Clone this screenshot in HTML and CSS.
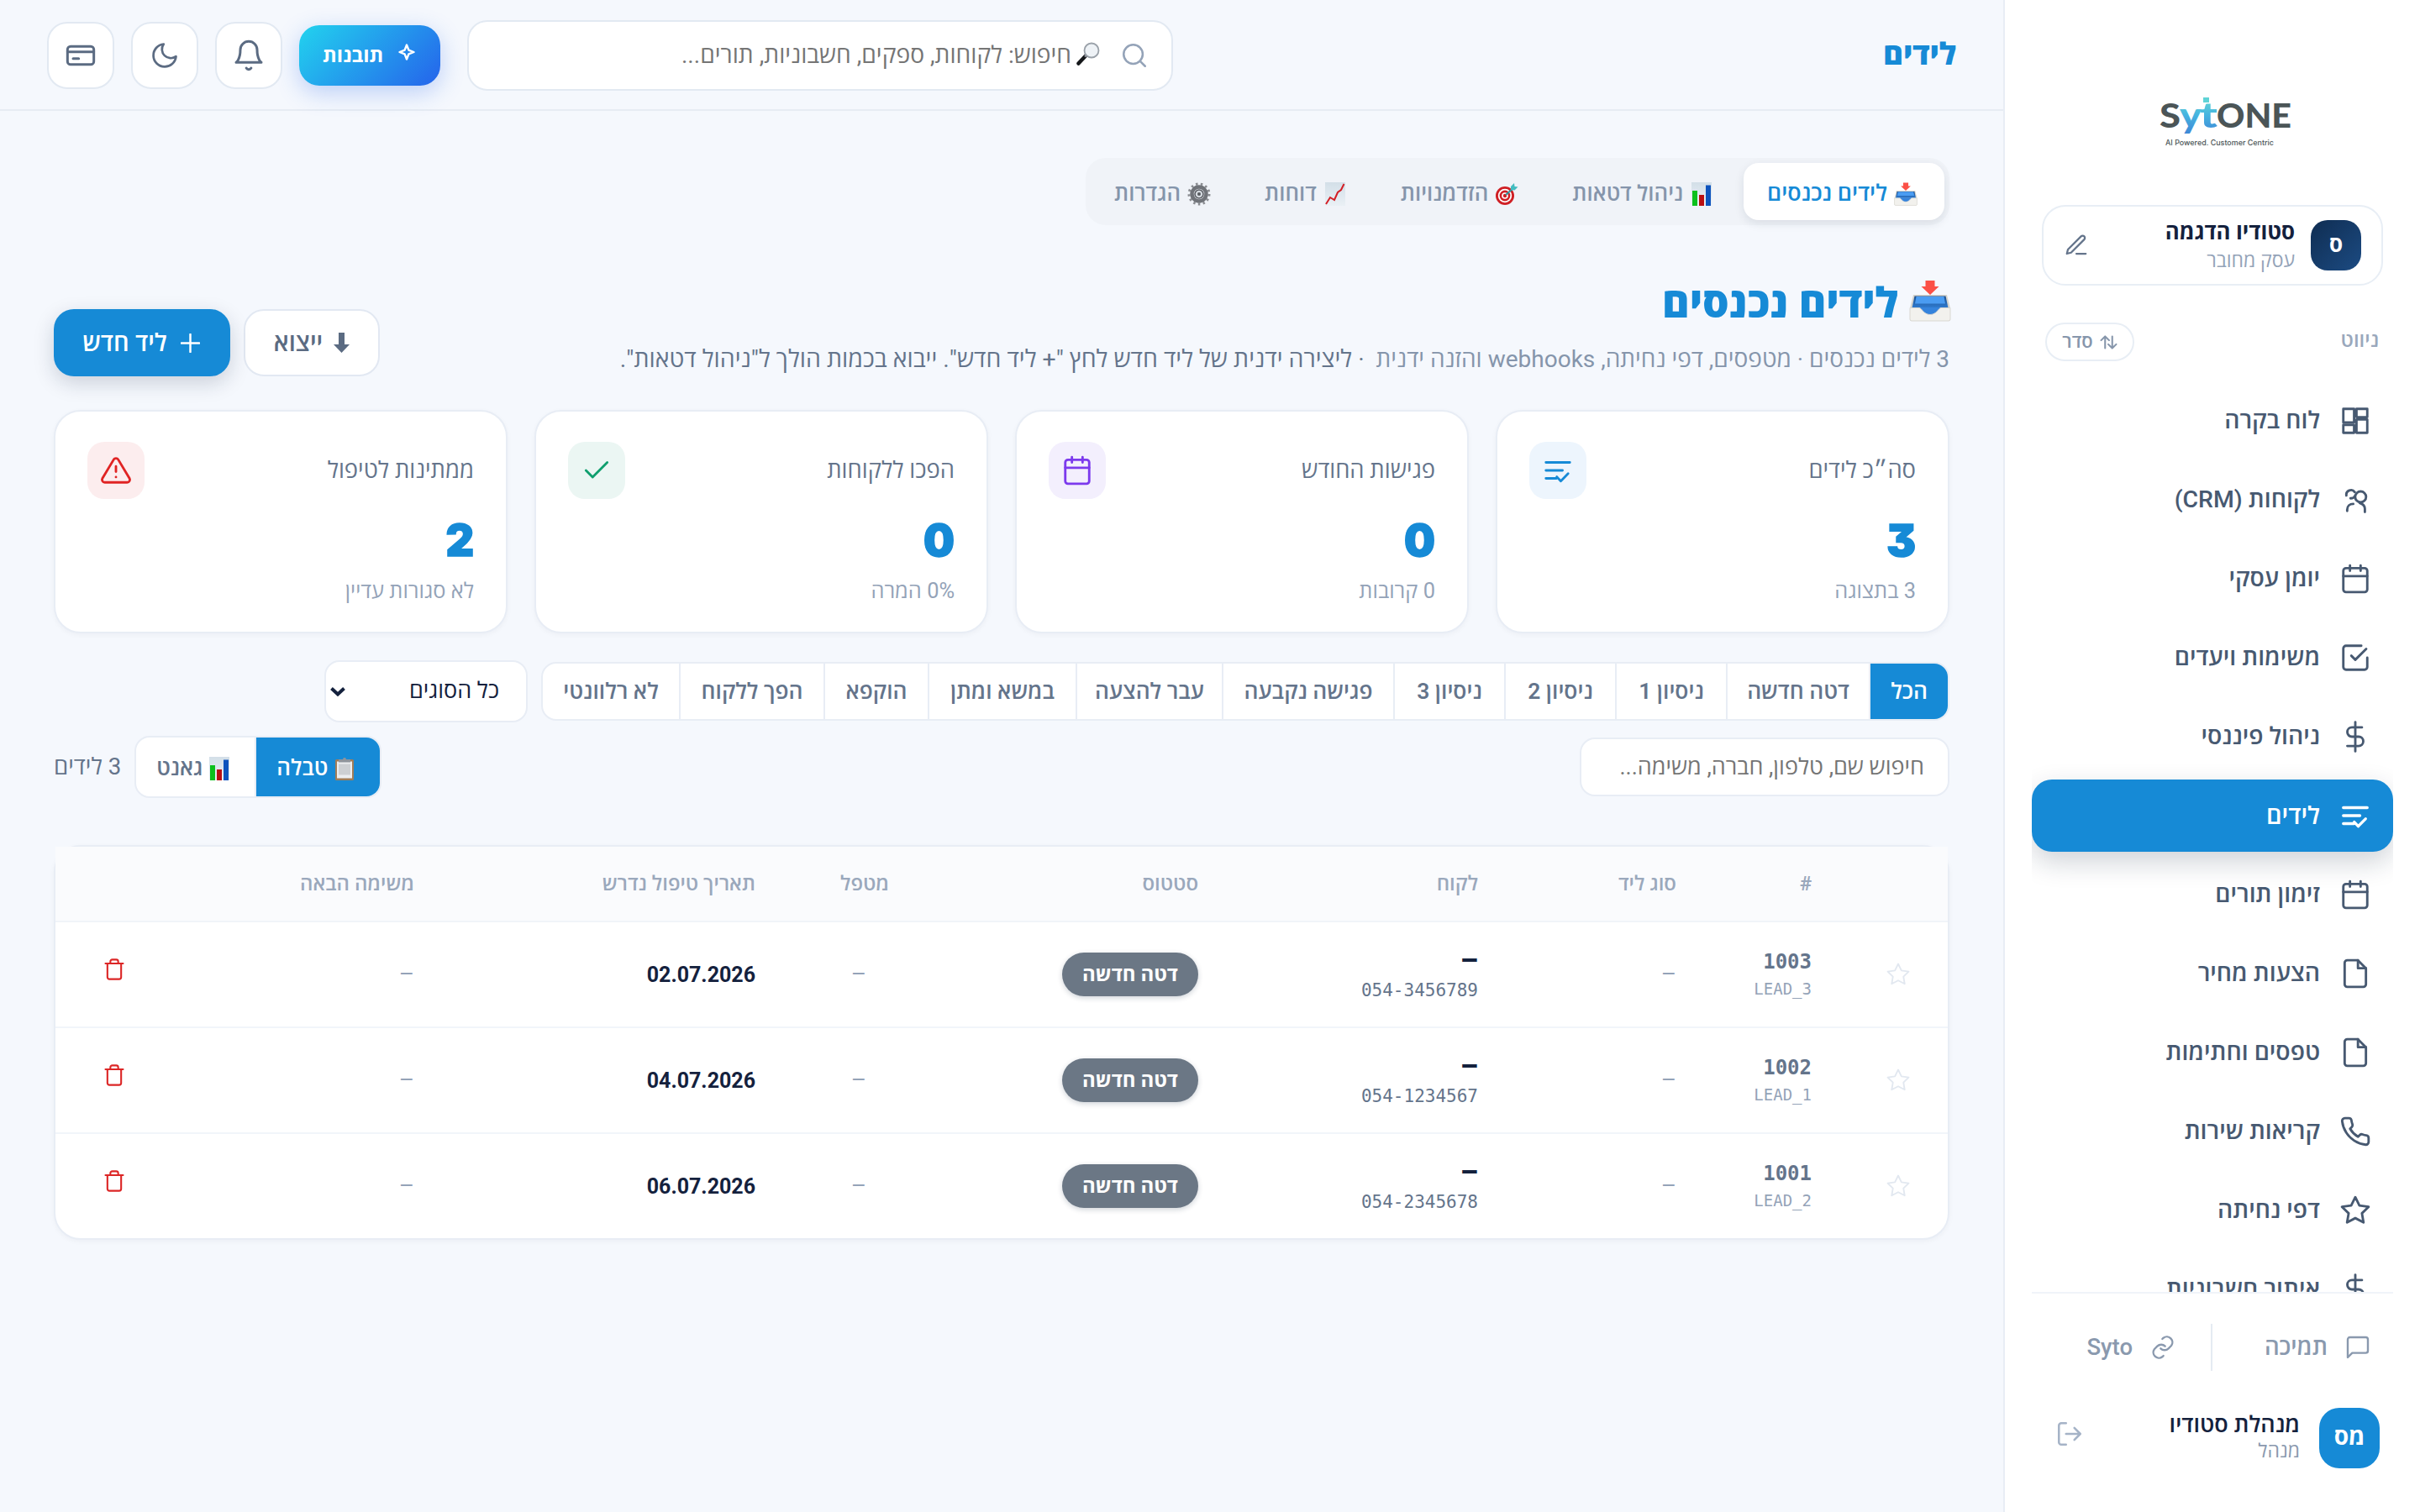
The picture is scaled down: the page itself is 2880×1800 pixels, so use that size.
FILE: index.html
```html
<!DOCTYPE html>
<html lang="he" dir="rtl">
<head>
    <meta charset="UTF-8">
    <meta name="viewport" content="width=device-width, initial-scale=1.0">
    <title>לידים</title>
    <link rel="stylesheet" href="styles.css">
</head>
<body>
    <svg class="sprite" aria-hidden="true">
        <defs>
            <linearGradient id="logo-grad" gradientUnits="userSpaceOnUse" x1="0" y1="4" x2="0" y2="46">
                <stop offset="0" stop-color="#63d6d4"/>
                <stop offset=".45" stop-color="#45b4e0"/>
                <stop offset="1" stop-color="#3f86d6"/>
            </linearGradient>
            <linearGradient id="tray-in" x1="0" y1="0" x2="0" y2="1">
                <stop offset="0" stop-color="#1d4f8c"/>
                <stop offset="1" stop-color="#2f7bd0"/>
            </linearGradient>
            <linearGradient id="paper" x1="0" y1="0" x2="0" y2="1">
                <stop offset="0" stop-color="#d3dfe8"/>
                <stop offset="1" stop-color="#eaf0f5"/>
            </linearGradient>
        </defs>

        <symbol id="i-dashboard" viewBox="0 0 24 24"><rect x="3" y="3" width="8.1" height="10.2"/><rect x="12.9" y="3" width="8.1" height="6.2"/><rect x="12.9" y="11" width="8.1" height="10"/><rect x="3" y="15" width="8.1" height="6"/></symbol>
        <symbol id="i-users" viewBox="0 0 24 24"><circle cx="16" cy="9.8" r="4.1"/><path d="M5.3 8.8a3.5 3.5 0 0 1 6.3-2.6M11.6 9.3c-.4 1-1.6 1.6-3.2 1.6M5.9 20.4v-1c0-2.5 1.9-4.3 4.6-4.3M15.4 14.4c2.4.7 3.8 2.3 3.8 4.4v2.4"/></symbol>
        <symbol id="i-calendar" viewBox="0 0 24 24"><rect x="3" y="4" width="18" height="18" rx="2"/><path d="M16 2v4M8 2v4M3 10h18"/></symbol>
        <symbol id="i-tasks" viewBox="0 0 24 24"><path d="M9 10.5l3 3 8.2-8.2"/><path d="M21 12v7a2 2 0 0 1-2 2H5a2 2 0 0 1-2-2V5a2 2 0 0 1 2-2h11.5"/></symbol>
        <symbol id="i-dollar" viewBox="0 0 24 24"><path d="M12 1v22M17 5H9.5a3.5 3.5 0 0 0 0 7h5a3.5 3.5 0 0 1 0 7H6"/></symbol>
        <symbol id="i-leads" viewBox="0 0 24 24"><path d="M3 6h18M3 12h12.5M3 18h8M11.2 16.8l3 3.2 5.5-5.6"/></symbol>
        <symbol id="i-file" viewBox="0 0 24 24"><path d="M14 2H6a2 2 0 0 0-2 2v16a2 2 0 0 0 2 2h12a2 2 0 0 0 2-2V8z"/><path d="M14 2v6h6"/></symbol>
        <symbol id="i-phone" viewBox="0 0 24 24"><path d="M22 16.92v3a2 2 0 0 1-2.18 2 19.79 19.79 0 0 1-8.63-3.07 19.5 19.5 0 0 1-6-6 19.79 19.79 0 0 1-3.07-8.67A2 2 0 0 1 4.11 2h3a2 2 0 0 1 2 1.72c.127.96.361 1.903.7 2.81a2 2 0 0 1-.45 2.11L8.09 9.91a16 16 0 0 0 6 6l1.27-1.27a2 2 0 0 1 2.11-.45c.907.339 1.85.573 2.81.7A2 2 0 0 1 22 16.92z"/></symbol>
        <symbol id="i-star" viewBox="0 0 24 24"><path d="M12 2l3.09 6.26L22 9.27l-5 4.87 1.18 6.88L12 17.77l-6.18 3.25L7 14.14 2 9.27l6.91-1.01z"/></symbol>
        <symbol id="i-message" viewBox="0 0 24 24"><path d="M21 15a2 2 0 0 1-2 2H7l-4 4V5a2 2 0 0 1 2-2h14a2 2 0 0 1 2 2z"/></symbol>
        <symbol id="i-link" viewBox="0 0 24 24"><path d="M10 13a5 5 0 0 0 7 0l2.5-2.5a5 5 0 0 0-7-7L11.5 4.5"/><path d="M14 11a5 5 0 0 0-7 0l-2.5 2.5a5 5 0 0 0 7 7l1-1"/></symbol>
        <symbol id="i-logout" viewBox="0 0 24 24"><path d="M9 21H5a2 2 0 0 1-2-2V5a2 2 0 0 1 2-2h4M16 17l5-5-5-5M21 12H9"/></symbol>
        <symbol id="i-edit" viewBox="0 0 24 24"><path d="M12 20h9M16.5 3.5a2.121 2.121 0 0 1 3 3L7 19l-4 1 1-4z"/></symbol>
        <symbol id="i-sort" viewBox="0 0 22 18"><path d="M6.5 16.5V1.5M1.5 6.5l5-5 5 5M15.5 1.5v15M10.5 11.5l5 5 5-5"/></symbol>
        <symbol id="i-search" viewBox="0 0 24 24"><circle cx="11" cy="11" r="8"/><path d="M21 21l-4.35-4.35"/></symbol>
        <symbol id="i-spark" viewBox="0 0 24 24"><path d="M12 3.5l2.4 6.1 6.1 2.4-6.1 2.4L12 20.5l-2.4-6.1L3.5 12l6.1-2.4z"/></symbol>
        <symbol id="i-bell" viewBox="0 0 24 24"><path d="M18 8A6 6 0 0 0 6 8c0 7-3 9-3 9h18s-3-2-3-9M13.73 21a2 2 0 0 1-3.46 0"/></symbol>
        <symbol id="i-moon" viewBox="0 0 24 24"><path d="M21 12.79A9 9 0 1 1 11.21 3 7 7 0 0 0 21 12.79z"/></symbol>
        <symbol id="i-card" viewBox="0 0 24 24"><rect x="2.6" y="5.5" width="18.8" height="13" rx="2.2"/><path d="M2.6 9.5h18.8M6.6 14.2h4"/></symbol>
        <symbol id="i-plus" viewBox="0 0 24 24"><path d="M12 1v22M1 12h22"/></symbol>
        <symbol id="i-check" viewBox="0 0 24 24"><path d="M20 6L9 17l-5-5"/></symbol>
        <symbol id="i-alert" viewBox="0 0 24 24"><path d="M10.29 3.86L1.82 18a2 2 0 0 0 1.71 3h16.94a2 2 0 0 0 1.71-3L13.71 3.86a2 2 0 0 0-3.42 0zM12 9v4M12 17h.01"/></symbol>
        <symbol id="i-trash" viewBox="0 0 24 24"><path d="M3 6h18M19 6v14a2 2 0 0 1-2 2H7a2 2 0 0 1-2-2V6M8 6V4a2 2 0 0 1 2-2h4a2 2 0 0 1 2 2v2"/></symbol>

        <!-- coloured glyphs used beside labels -->
        <symbol id="e-inbox" viewBox="0 0 50 50">
            <path d="M5 18h40l4 16v13a2 2 0 0 1-2 2H3a2 2 0 0 1-2-2V34z" fill="#d5d3cc"/>
            <path d="M6.5 19.5h37l3 14h-43z" fill="url(#tray-in)"/>
            <path d="M8.5 20h33l1.5 8.5H7z" fill="#4a9cf2"/>
            <path d="M12 33h26v4l-7 5H19l-7-5z" fill="#3583dc"/>
            <path d="M1 33.5h11c3 0 5 8 13 8s10-8 13-8h11V47a2 2 0 0 1-2 2H3a2 2 0 0 1-2-2z" fill="#f2f1ed" stroke="#d9d7d1"/>
            <path d="M19.5 1h11v7h5L25 18 14.5 8h5z" fill="#fb5046"/>
        </symbol>
        <symbol id="e-bars" viewBox="0 0 24 28">
            <rect x="0" y="0" width="24" height="28" fill="url(#paper)"/>
            <rect x="1" y="10" width="6" height="18" fill="#0cc01c"/>
            <rect x="9" y="15" width="6" height="13" fill="#b90f12"/>
            <rect x="17" y="3.5" width="6" height="24.5" fill="#0d53bd"/>
        </symbol>
        <symbol id="e-target" viewBox="0 0 28 28">
            <circle cx="12" cy="16" r="11" fill="#cf1f24"/>
            <circle cx="12" cy="16" r="8.2" fill="#fff"/>
            <circle cx="12" cy="16" r="6.4" fill="#cf1f24"/>
            <circle cx="12" cy="16" r="3.8" fill="#fff"/>
            <circle cx="12" cy="16" r="2.2" fill="#cf1f24"/>
            <path d="M13 15l9-8" stroke="#2f9aa0" stroke-width="2"/>
            <path d="M19 9V5l4-4 .5 4 4 .5-4 4z" fill="#43bcc0"/>
        </symbol>
        <symbol id="e-trend" viewBox="0 0 24 28">
            <rect x="0" y="0" width="24" height="28" fill="url(#paper)"/>
            <path d="M1 26l5-8 5 3 4-9 4-3 3.5-7" fill="none" stroke="#d31f26" stroke-width="2"/>
        </symbol>
        <symbol id="e-gear" viewBox="0 0 28 28">
            <circle cx="14" cy="14" r="12" fill="none" stroke="#8b8d92" stroke-width="3" stroke-dasharray="2.5 3.3"/>
            <circle cx="14" cy="14" r="8.5" fill="none" stroke="#707379" stroke-width="4.5"/>
            <circle cx="14" cy="14" r="5" fill="#d3d8de" stroke="#55585e" stroke-width="1.5"/>
            <circle cx="14" cy="14" r="2" fill="#56595e"/>
        </symbol>
        <symbol id="e-magnifier" viewBox="0 0 28 28">
            <path d="M2.5 25.5l8-8.5" stroke="#15171a" stroke-width="4.5" stroke-linecap="round"/>
            <path d="M10 17.5l2-2" stroke="#8a9098" stroke-width="2.5"/>
            <circle cx="18" cy="10" r="8.5" fill="#eef2f6" stroke="#9aa1a9" stroke-width="1.8"/>
        </symbol>
        <symbol id="e-clipboard" viewBox="0 0 24 28">
            <rect x="1" y="3" width="22" height="25" rx="1.5" fill="#a07d58"/>
            <rect x="3" y="5.5" width="18" height="20" fill="#eceef0"/>
            <rect x="5" y="8.5" width="14" height="13" fill="#cdd0d3"/>
            <path d="M5 3h5a2 2 0 0 1 4 0h5v3.5H5z" fill="#8f959c"/>
        </symbol>
    </svg>

    <div class="app">
        <aside class="sidebar">
            <div class="logo">
                <svg width="158" height="62" viewBox="0 0 158 62">
                    <text class="logo-text" x="0" y="38" textLength="25" lengthAdjust="spacingAndGlyphs">S</text>
                    <text class="logo-mark" x="24" y="38" textLength="26" lengthAdjust="spacingAndGlyphs">y</text>
                    <text class="logo-mark" x="48" y="38" textLength="21" lengthAdjust="spacingAndGlyphs">t</text>
                    <rect x="52" y="2" width="7" height="6" fill="#5fd3d6"/>
                    <text class="logo-text" x="68" y="38" textLength="89" lengthAdjust="spacingAndGlyphs">ONE</text>
                    <text class="logo-sub" x="7" y="59" textLength="129" lengthAdjust="spacingAndGlyphs">AI Powered. Customer Centric</text>
                </svg>
            </div>

            <div class="business">
                <div class="business-avatar">ס</div>
                <div class="business-info">
                    <div class="business-name">סטודיו הדגמה</div>
                    <div class="business-sub">עסק מחובר</div>
                </div>
                <svg class="icon business-edit"><use href="#i-edit"/></svg>
            </div>

            <div class="nav-head">
                <span class="nav-title">ניווט</span>
                <button class="sort-btn"><svg class="icon"><use href="#i-sort"/></svg>סדר</button>
            </div>

            <nav class="nav">
                <a class="nav-item"><svg class="icon"><use href="#i-dashboard"/></svg>לוח בקרה</a>
                <a class="nav-item"><svg class="icon"><use href="#i-users"/></svg><span>לקוחות <span class="latin">(CRM)</span></span></a>
                <a class="nav-item"><svg class="icon"><use href="#i-calendar"/></svg>יומן עסקי</a>
                <a class="nav-item"><svg class="icon"><use href="#i-tasks"/></svg>משימות ויעדים</a>
                <a class="nav-item"><svg class="icon"><use href="#i-dollar"/></svg>ניהול פיננסי</a>
                <a class="nav-item active"><svg class="icon"><use href="#i-leads"/></svg>לידים</a>
                <a class="nav-item"><svg class="icon"><use href="#i-calendar"/></svg>זימון תורים</a>
                <a class="nav-item"><svg class="icon"><use href="#i-file"/></svg>הצעות מחיר</a>
                <a class="nav-item"><svg class="icon"><use href="#i-file"/></svg>טפסים וחתימות</a>
                <a class="nav-item"><svg class="icon"><use href="#i-phone"/></svg>קריאות שירות</a>
                <a class="nav-item"><svg class="icon"><use href="#i-star"/></svg>דפי נחיתה</a>
                <a class="nav-item"><svg class="icon"><use href="#i-dollar"/></svg>איתור חשבוניות</a>
            </nav>

            <div class="side-foot">
                <div class="side-links">
                    <a class="side-link"><svg class="icon"><use href="#i-message"/></svg>תמיכה</a>
                    <a class="side-link"><svg class="icon"><use href="#i-link"/></svg><span class="latin">Syto</span></a>
                </div>
                <div class="user">
                    <div class="user-avatar">מס</div>
                    <div class="user-info">
                        <div class="user-name">מנהלת סטודיו</div>
                        <div class="user-role">מנהל</div>
                    </div>
                    <svg class="icon user-logout"><use href="#i-logout"/></svg>
                </div>
            </div>
        </aside>

        <div class="main">
            <header class="topbar">
                <div class="topbar-title">לידים</div>
                <div class="topbar-tools">
                    <div class="search">
                        <svg class="icon"><use href="#i-search"/></svg>
                        <svg class="emoji"><use href="#e-magnifier"/></svg>
                        <span class="search-text">חיפוש: לקוחות, ספקים, חשבוניות, תורים...</span>
                    </div>
                    <div class="topbar-actions">
                        <button class="insights"><svg class="icon"><use href="#i-spark"/></svg>תובנות</button>
                        <button class="icon-btn"><svg class="icon bell"><use href="#i-bell"/></svg></button>
                        <button class="icon-btn"><svg class="icon"><use href="#i-moon"/></svg></button>
                        <button class="icon-btn"><svg class="icon card"><use href="#i-card"/></svg></button>
                    </div>
                </div>
            </header>

            <main class="content">
                <div class="tabs">
                    <button class="tab active"><svg class="emoji"><use href="#e-inbox"/></svg>לידים נכנסים</button>
                    <button class="tab"><svg class="emoji"><use href="#e-bars"/></svg>ניהול דטאות</button>
                    <button class="tab"><svg class="emoji"><use href="#e-target"/></svg>הזדמנויות</button>
                    <button class="tab"><svg class="emoji"><use href="#e-trend"/></svg>דוחות</button>
                    <button class="tab"><svg class="emoji"><use href="#e-gear"/></svg>הגדרות</button>
                </div>

                <div class="page-head">
                    <div class="page-titles">
                        <h1 class="page-title"><svg class="emoji"><use href="#e-inbox"/></svg>לידים נכנסים</h1>
                        <p class="page-sub"><span class="sub-main">3 לידים נכנסים · מטפסים, דפי נחיתה, webhooks והזנה ידנית</span><span class="sub-hint">· ליצירה ידנית של ליד חדש לחץ "+ ליד חדש". ייבוא בכמות הולך ל"ניהול דטאות".</span></p>
                    </div>
                    <div class="page-actions">
                        <button class="btn btn-light"><svg class="arrow-down" viewBox="0 0 19 24"><path d="M6 0h7v14h6L9.5 24 0 14h6z"/></svg>ייצוא</button>
                        <button class="btn btn-primary"><svg class="icon"><use href="#i-plus"/></svg>ליד חדש</button>
                    </div>
                </div>

                <div class="stats">
                    <div class="stat">
                        <div class="stat-top"><span class="stat-label">סה״כ לידים</span><span class="stat-icon blue"><svg class="icon"><use href="#i-leads"/></svg></span></div>
                        <div class="stat-value">3</div>
                        <div class="stat-note">3 בתצוגה</div>
                    </div>
                    <div class="stat">
                        <div class="stat-top"><span class="stat-label">פגישות החודש</span><span class="stat-icon purple"><svg class="icon"><use href="#i-calendar"/></svg></span></div>
                        <div class="stat-value">0</div>
                        <div class="stat-note">0 קרובות</div>
                    </div>
                    <div class="stat">
                        <div class="stat-top"><span class="stat-label">הפכו ללקוחות</span><span class="stat-icon green"><svg class="icon"><use href="#i-check"/></svg></span></div>
                        <div class="stat-value">0</div>
                        <div class="stat-note">0% המרה</div>
                    </div>
                    <div class="stat">
                        <div class="stat-top"><span class="stat-label">ממתינות לטיפול</span><span class="stat-icon red"><svg class="icon"><use href="#i-alert"/></svg></span></div>
                        <div class="stat-value">2</div>
                        <div class="stat-note">לא סגורות עדיין</div>
                    </div>
                </div>

                <div class="filters">
                    <div class="segments">
                        <button class="segment active">הכל</button>
                        <button class="segment">דטה חדשה</button>
                        <button class="segment">ניסיון 1</button>
                        <button class="segment">ניסיון 2</button>
                        <button class="segment">ניסיון 3</button>
                        <button class="segment">פגישה נקבעה</button>
                        <button class="segment">עבר להצעה</button>
                        <button class="segment">במשא ומתן</button>
                        <button class="segment">הוקפא</button>
                        <button class="segment">הפך ללקוח</button>
                        <button class="segment">לא רלוונטי</button>
                    </div>
                    <div class="select">כל הסוגים<svg class="icon" viewBox="0 0 20 12"><path d="M2.5 2.5l7.5 7 7.5-7"/></svg></div>
                </div>

                <div class="subfilters">
                    <input class="lead-search" type="text" placeholder="חיפוש שם, טלפון, חברה, משימה...">
                    <div class="view-side">
                        <div class="views">
                            <button class="view active"><svg class="emoji"><use href="#e-clipboard"/></svg>טבלה</button>
                            <button class="view"><svg class="emoji"><use href="#e-bars"/></svg>גאנט</button>
                        </div>
                        <span class="count">3 לידים</span>
                    </div>
                </div>

                <div class="table-card">
                    <table class="leads">
                        <colgroup>
                            <col class="c-star"><col class="c-id"><col class="c-type"><col class="c-client"><col class="c-status">
                            <col class="c-owner"><col class="c-date"><col class="c-task"><col class="c-del">
                        </colgroup>
                        <thead>
                            <tr>
                                <th></th><th>#</th><th>סוג ליד</th><th>לקוח</th><th>סטטוס</th>
                                <th>מטפל</th><th>תאריך טיפול נדרש</th><th>משימה הבאה</th><th></th>
                            </tr>
                        </thead>
                        <tbody>
                            <tr>
                                <td class="cell-star"><svg class="icon"><use href="#i-star"/></svg></td>
                                <td><div class="lead-no">1003</div><div class="lead-key">LEAD_3</div></td>
                                <td class="muted">–</td>
                                <td><div class="client">–</div><div class="phone">054-3456789</div></td>
                                <td><span class="pill">דטה חדשה</span></td>
                                <td class="muted cell-owner">–</td>
                                <td class="date">02.07.2026</td>
                                <td class="muted">–</td>
                                <td class="cell-del"><svg class="icon"><use href="#i-trash"/></svg></td>
                            </tr>
                            <tr>
                                <td class="cell-star"><svg class="icon"><use href="#i-star"/></svg></td>
                                <td><div class="lead-no">1002</div><div class="lead-key">LEAD_1</div></td>
                                <td class="muted">–</td>
                                <td><div class="client">–</div><div class="phone">054-1234567</div></td>
                                <td><span class="pill">דטה חדשה</span></td>
                                <td class="muted cell-owner">–</td>
                                <td class="date">04.07.2026</td>
                                <td class="muted">–</td>
                                <td class="cell-del"><svg class="icon"><use href="#i-trash"/></svg></td>
                            </tr>
                            <tr>
                                <td class="cell-star"><svg class="icon"><use href="#i-star"/></svg></td>
                                <td><div class="lead-no">1001</div><div class="lead-key">LEAD_2</div></td>
                                <td class="muted">–</td>
                                <td><div class="client">–</div><div class="phone">054-2345678</div></td>
                                <td><span class="pill">דטה חדשה</span></td>
                                <td class="muted cell-owner">–</td>
                                <td class="date">06.07.2026</td>
                                <td class="muted">–</td>
                                <td class="cell-del"><svg class="icon"><use href="#i-trash"/></svg></td>
                            </tr>
                        </tbody>
                    </table>
                </div>
            </main>
        </div>
    </div>
</body>
</html>
```
FILE: styles.css
```css
* { box-sizing: border-box; }

body {
    margin: 0;
    background: #f5f8fd;
    color: #14213d;
    font-family: Roboto, "Open Sans", "Noto Sans", sans-serif;
    font-size: 28px;
    line-height: 1.4;
}

button {
    font: inherit;
    color: inherit;
    border: 0;
    background: none;
    padding: 0;
    cursor: pointer;
    white-space: nowrap;
}

.sprite { position: absolute; width: 0; height: 0; overflow: hidden; }

.icon {
    display: block;
    flex: none;
    width: 38px;
    height: 38px;
    fill: none;
    stroke: currentColor;
    stroke-width: 1.8;
    stroke-linecap: round;
    stroke-linejoin: round;
}

.emoji { display: block; flex: none; width: 28px; height: 28px; }
.latin { font-weight: 500; }

.app { display: flex; height: 1800px; overflow: hidden; }

/* sidebar */
.sidebar {
    display: flex;
    flex-direction: column;
    flex: none;
    width: 496px;
    padding: 0 32px;
    background: #fff;
    border-left: 2px solid #e8edf5;
}

.logo {
    display: flex;
    justify-content: center;
    height: 244px;
    padding: 114px 0 0 32px;
    direction: ltr;
}
.logo-text { font: 900 39px Lato, sans-serif; fill: #4b5557; }
.logo-mark { font: 900 42px Lato, sans-serif; fill: url(#logo-grad); }
.logo-sub { font: 500 9px Inter, sans-serif; fill: #4b5557; }

.business {
    display: flex;
    align-items: center;
    gap: 19px;
    height: 96px;
    margin: 0 12px;
    padding: 0 24px;
    border: 2px solid #e8eef5;
    border-radius: 28px;
}
.business-avatar {
    width: 60px;
    height: 60px;
    border-radius: 20px;
    background: linear-gradient(135deg, #0f2d52, #1c4b82);
    color: #fff;
    font-weight: 700;
    font-size: 26px;
    line-height: 58px;
    text-align: center;
}
.business-info { flex: 1; padding-top: 2px; }
.business-name { font-size: 25.8px; font-weight: 700; line-height: 36px; }
.business-sub { font-size: 23px; line-height: 34px; color: #94a3b8; }
.business-edit { width: 30px; height: 30px; color: #64748b; }

.nav-head {
    display: flex;
    align-items: center;
    justify-content: space-between;
    height: 46px;
    margin: 44px 0 28px;
    padding: 0 17px 0 16px;
}
.nav-title { font-size: 24px; font-weight: 600; color: #9aa8bc; margin-top: -2px; }
.sort-btn {
    display: flex;
    align-items: center;
    justify-content: center;
    gap: 8px;
    width: 106px;
    height: 46px;
    border: 2px solid #e8eef5;
    border-radius: 23px;
    font-size: 22px;
    font-weight: 600;
    color: #8696ab;
}
.sort-btn .icon { width: 21px; height: 17px; stroke-width: 2.2; }

.nav {
    display: flex;
    flex-direction: column;
    gap: 8px;
    flex: 1;
    overflow: hidden;
}
.nav-item {
    display: flex;
    align-items: center;
    gap: 23px;
    flex: none;
    height: 86px;
    padding: 0 26px;
    border-radius: 24px;
    font-size: 28.4px;
    font-weight: 600;
    color: #475971;
}
.nav-item.active {
    background: #168ad6;
    color: #fff;
    font-size: 29px;
    box-shadow: 0 12px 32px rgba(15, 35, 60, .2);
}
.nav-item.active .icon { stroke-width: 2.1; }

.side-foot { height: 262px; border-top: 2px solid #f0f4f9; padding-top: 36px; }
.side-links { display: flex; height: 56px; }
.side-link {
    display: flex;
    align-items: center;
    gap: 20px;
    width: 50%;
    padding-right: 26px;
    color: #8a99ae;
    font-size: 27.5px;
    font-weight: 600;
}
.side-link + .side-link { border-right: 2px solid #e5ebf2; padding-right: 41px; }
.side-link .icon { width: 32px; height: 32px; }

.user { display: flex; align-items: center; gap: 23px; height: 72px; margin-top: 44px; padding: 0 16px 0 28px; }
.user-avatar {
    width: 72px;
    height: 72px;
    border-radius: 24px;
    background: #168ad6;
    color: #fff;
    font-weight: 700;
    line-height: 70px;
    text-align: center;
}
.user-info { flex: 1; }
.user-name { font-size: 27px; font-weight: 600; line-height: 34px; }
.user-role { font-size: 23px; line-height: 30px; color: #8a99ae; margin-bottom: 3px; }
.user-logout { width: 34px; height: 34px; color: #a5b3c7; margin-bottom: 10px; }

/* top bar */
.main { flex: 1; min-width: 0; }
.topbar {
    display: flex;
    align-items: center;
    justify-content: space-between;
    height: 132px;
    padding: 0 56px;
    border-bottom: 2px solid #e7ecf3;
}
.topbar-title { font-size: 36.5px; font-weight: 800; color: #168ad6; line-height: 50px; }
.topbar-tools { display: flex; align-items: center; gap: 32px; padding-top: 2px; }
.search {
    display: flex;
    align-items: center;
    width: 840px;
    height: 84px;
    padding: 0 27px;
    background: #fff;
    border: 2px solid #e2e9f2;
    border-radius: 24px;
    color: #757575;
    font-size: 28.2px;
}
.search .icon { width: 34px; height: 34px; color: #94a3b8; }
.search .emoji { margin: 0 24px 4px 6px; }
.topbar-actions { display: flex; align-items: center; gap: 20px; }
.insights {
    display: flex;
    align-items: center;
    justify-content: space-between;
    width: 168px;
    height: 72px;
    padding: 2px 28px 0;
    border-radius: 24px;
    background: linear-gradient(135deg, #22d3ee, #2563eb);
    box-shadow: 0 8px 28px rgba(37, 99, 235, .28);
    color: #fff;
    font-size: 24px;
    font-weight: 700;
}
.insights .icon { width: 24px; height: 24px; margin-bottom: 10px; stroke-width: 2.4; }
.icon-btn {
    display: flex;
    align-items: center;
    justify-content: center;
    width: 80px;
    height: 80px;
    background: #fff;
    border: 2px solid #e2e9f2;
    border-radius: 24px;
    color: #5b6b82;
}
.icon-btn .icon { width: 36px; height: 36px; }
.icon-btn .bell, .icon-btn .card { width: 40px; height: 40px; }

/* content */
.content { padding: 56px 64px 0; }

.tabs {
    display: flex;
    gap: 4px;
    width: fit-content;
    height: 80px;
    padding: 6px;
    border-radius: 24px;
    background: #f0f3f8;
}
.tab {
    display: flex;
    align-items: center;
    gap: 8px;
    padding: 5px 32px 0 28px;
    border-radius: 18px;
    font-size: 25.8px;
    font-weight: 600;
    color: #8595ab;
}
.tab.active {
    background: #fff;
    color: #168ad6;
    font-size: 26.8px;
    box-shadow: 0 4px 12px rgba(15, 35, 60, .1);
}

.page-head {
    display: flex;
    align-items: flex-end;
    justify-content: space-between;
    height: 120px;
    margin: 60px 0 40px;
}
.page-title {
    display: flex;
    align-items: center;
    gap: 13px;
    margin: 0;
    font-size: 49.6px;
    font-weight: 800;
    line-height: 64px;
    color: #168ad6;
}
.page-title .emoji { width: 50px; height: 50px; margin-right: -2px; margin-bottom: 6px; }
.page-sub { display: flex; gap: 14px; margin: 15px 0 0; line-height: 40px; color: #64748b; white-space: nowrap; }
.sub-main { color: #8595ab; }
.sub-hint { font-size: 28.5px; }

.page-actions { display: flex; gap: 16px; }
.btn {
    display: flex;
    align-items: center;
    justify-content: center;
    height: 80px;
    border-radius: 24px;
    font-size: 29px;
    font-weight: 600;
}
.btn-light { gap: 13px; width: 162px; background: #fff; border: 2px solid #e2e8f2; color: #5b6b82; }
.btn-primary {
    gap: 16px;
    width: 210px;
    padding-right: 2px;
    background: #168ad6;
    color: #fff;
    box-shadow: 0 8px 24px rgba(15, 35, 60, .18);
}
.btn-primary .icon { width: 23px; height: 23px; stroke-width: 2.6; }
.arrow-down { width: 19px; height: 24px; fill: currentColor; }

.stats { display: grid; grid-template-columns: repeat(4, 1fr); gap: 32px; }
.stat {
    height: 266px;
    padding: 36px 38px;
    background: #fff;
    border: 2px solid #e8edf5;
    border-radius: 32px;
    box-shadow: 0 2px 6px rgba(15, 35, 60, .04);
}
.stat-top { display: flex; align-items: center; justify-content: space-between; height: 68px; }
.stat-label { font-size: 27.4px; font-weight: 500; color: #64748b; }
.stat-icon {
    display: flex;
    align-items: center;
    justify-content: center;
    width: 68px;
    height: 68px;
    border-radius: 20px;
}
.blue { background: #edf5fd; color: #168ad6; }
.purple { background: #f3effd; color: #7c3aed; }
.green { background: #ebf6f3; color: #0f9f6e; }
.red { background: #fcedee; color: #e02424; }
.stat-value {
    margin-top: 17px;
    font-family: Inter, Roboto, sans-serif;
    font-size: 52px;
    font-weight: 900;
    font-feature-settings: "cv09";
    -webkit-text-stroke: 1.5px #168ad6;
    line-height: 66px;
    color: #168ad6;
}
.stat-note { margin-top: 10px; font-size: 25.4px; line-height: 32px; color: #94a3b8; }

.filters { display: flex; align-items: center; gap: 16px; margin-top: 32px; }
.segments {
    display: grid;
    grid-template-columns: 92px 170px 132px 132px 132px 204px 174px 176px 124px 172px 164px;
    height: 70px;
    overflow: hidden;
    background: #fff;
    border: 2px solid #e8edf5;
    border-radius: 18px;
}
.segment { font-size: 26.4px; font-weight: 600; color: #64748b; }
.segment + .segment { border-right: 2px solid #e8edf5; }
.segment.active { background: #168ad6; color: #fff; }
.select {
    display: flex;
    align-items: center;
    justify-content: space-between;
    width: 242px;
    height: 74px;
    padding: 0 32px 0 4px;
    background: #fff;
    border: 2px solid #e8edf5;
    border-radius: 18px;
    font-size: 27px;
}
.select .icon { width: 20px; height: 12px; stroke-width: 4; stroke-linecap: butt; stroke-linejoin: miter; }

.subfilters { display: flex; align-items: center; justify-content: space-between; margin-top: 16px; }
.lead-search {
    width: 440px;
    height: 70px;
    padding: 0 28px;
    background: #fff;
    border: 2px solid #e8edf5;
    border-radius: 18px;
    font-family: inherit;
    font-size: 27px;
}
.lead-search::placeholder { color: #757575; }
.view-side { display: flex; align-items: center; gap: 16px; }
.views {
    display: flex;
    height: 74px;
    overflow: hidden;
    background: #fff;
    border: 2px solid #e8edf5;
    border-radius: 18px;
}
.view {
    display: flex;
    align-items: center;
    gap: 8px;
    padding: 3px 30px 0 24px;
    font-size: 26px;
    font-weight: 600;
    color: #64748b;
}
.view .emoji { width: 24px; }
.view + .view { border-right: 2px solid #e8edf5; }
.view.active { background: #168ad6; color: #fff; }
.count { font-size: 27.6px; color: #64748b; }

/* leads table */
.table-card {
    margin-top: 56px;
    background: #fff;
    border: 2px solid #e8edf5;
    border-radius: 32px;
    box-shadow: 0 2px 6px rgba(15, 35, 60, .04);
}
.leads { width: 100%; table-layout: fixed; border-collapse: separate; border-spacing: 0; }
.c-star { width: 134px; }
.c-id { width: 161px; }
.c-type { width: 236px; }
.c-client { width: 333px; }
.c-status { width: 368px; }
.c-owner { width: 159px; }
.c-date { width: 406px; }
.c-task { width: 313px; }
.c-del { width: 142px; }

.leads th {
    height: 90px;
    padding: 2px 28px 0;
    background: #fafbfd;
    border-bottom: 2px solid #f0f4f9;
    font-size: 24px;
    font-weight: 600;
    color: #9aa8bc;
    text-align: right;
    white-space: nowrap;
}
.leads td { height: 126px; padding: 0 28px; border-bottom: 2px solid #f1f5fa; vertical-align: middle; white-space: nowrap; }
.leads tr:last-child td { height: 124px; border-bottom: 0; }
.lead-no, .lead-key, .phone { font-family: "DejaVu Sans Mono", monospace; }
.lead-no { font-size: 24px; font-weight: 700; line-height: 34px; color: #64748b; }
.lead-key { font-size: 19px; line-height: 30px; color: #94a3b8; }
.client { font-size: 34px; font-weight: 800; line-height: 38px; }
.phone { font-size: 21px; line-height: 34px; color: #64748b; }
.muted { font-size: 28px; color: #94a3b8; }
.date { font-size: 25px; font-weight: 700; }
.leads .cell-owner { padding-right: 55px; }
.pill {
    display: inline-block;
    height: 52px;
    padding: 0 24px;
    border-radius: 26px;
    background: #6b7785;
    box-shadow: 0 2px 6px rgba(15, 35, 60, .2);
    color: #fff;
    font-size: 24px;
    font-weight: 700;
    line-height: 52px;
    vertical-align: middle;
}
.cell-star .icon { width: 30px; height: 30px; margin-right: 16px; stroke-width: 1.5; color: #e2e8f0; }
.cell-del .icon { width: 28px; height: 28px; margin: 0 30px 12px 0; color: #dc2626; }
```
